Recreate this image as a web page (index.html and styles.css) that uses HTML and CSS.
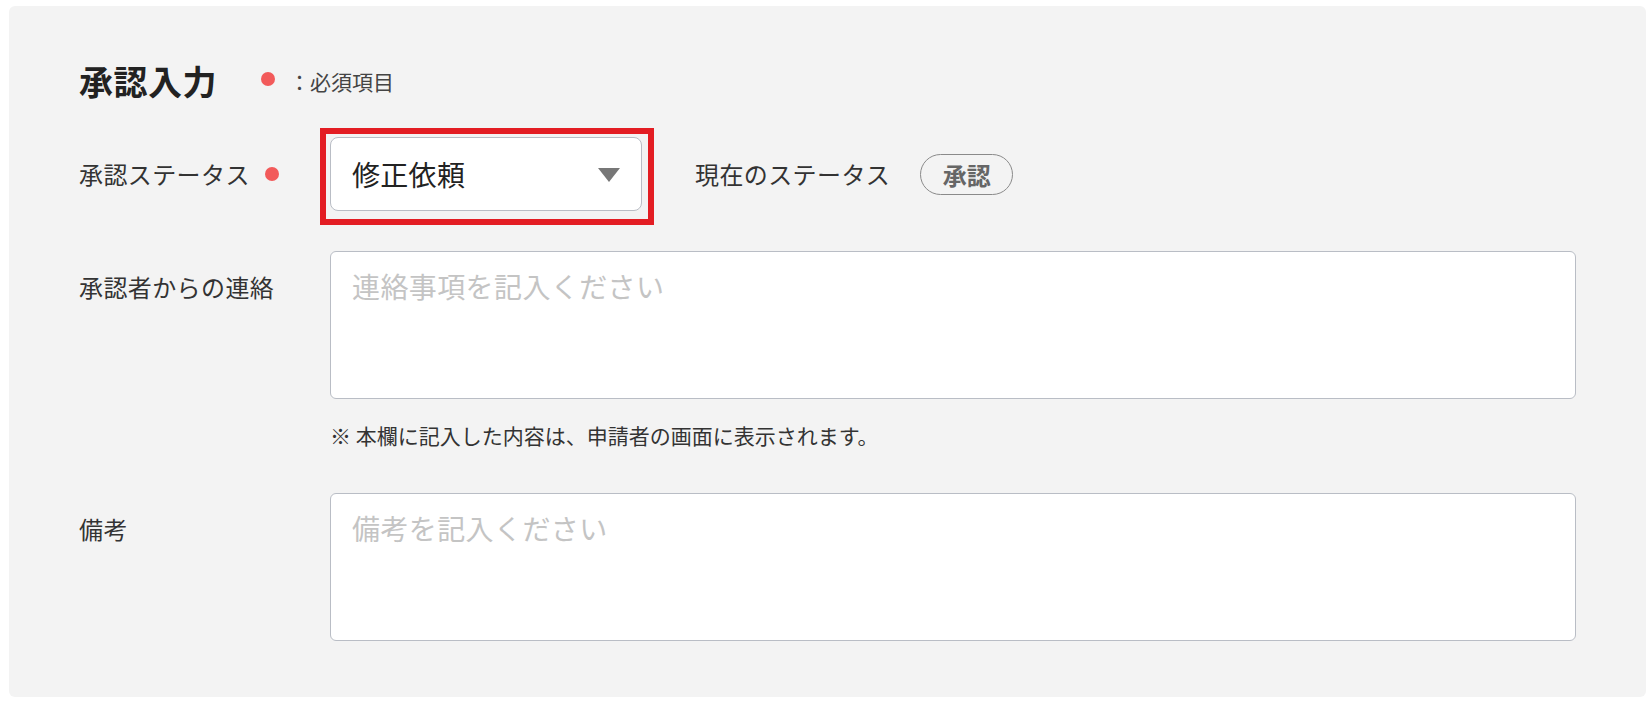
FILE: index.html
```html
<!DOCTYPE html>
<html lang="ja">
<head>
<meta charset="utf-8">
<title>承認入力</title>
<link rel="stylesheet" href="styles.css">
</head>
<body>
<div class="page">
  <section class="panel">
    <div class="title-row">
      <h1 class="title">承認入力</h1>
      <span class="req-dot title-dot"></span>
      <span class="req-note">：必須項目</span>
    </div>

    <div class="row row-status">
      <div class="label">承認ステータス<span class="req-dot label-dot"></span></div>
      <div class="select-wrap">
        <div class="select">
          <span class="select-value">修正依頼</span>
          <svg class="select-arrow" width="22" height="14" viewBox="0 0 22 14"><path d="M0 0 H22 L11 14 Z" fill="#777"/></svg>
        </div>
      </div>
      <span class="current-label">現在のステータス</span>
      <span class="badge">承認</span>
    </div>

    <div class="row row-text">
      <div class="label label-top">承認者からの連絡</div>
      <div class="field">
        <textarea class="textarea" placeholder="連絡事項を記入ください"></textarea>
        <p class="note">※ 本欄に記入した内容は、申請者の画面に表示されます。</p>
      </div>
    </div>

    <div class="row row-text row-remarks">
      <div class="label label-top">備考</div>
      <div class="field">
        <textarea class="textarea" placeholder="備考を記入ください"></textarea>
      </div>
    </div>
  </section>
</div>
</body>
</html>
```

FILE: styles.css
```css
html, body {
  margin: 0;
  padding: 0;
  background: #ffffff;
}

body {
  font-family: "Noto Sans CJK JP", "Noto Sans", sans-serif;
  color: #333333;
}

.page {
  padding: 6px 5px 9px 9px;
}

.panel {
  background: #f3f3f3;
  border-radius: 6px;
  padding: 50px 70px 56px 70px;
}

.title-row {
  display: flex;
  align-items: center;
  height: 50px;
}

.title {
  margin: 0;
  font-size: 34px;
  line-height: 50px;
  font-weight: 700;
  letter-spacing: 0.5px;
  color: #222222;
}

.req-dot {
  display: inline-block;
  width: 14px;
  height: 14px;
  border-radius: 50%;
  background: #f25a5a;
  flex: none;
}

.title-dot {
  margin-left: 44px;
  margin-top: -4px;
}

.req-note {
  margin-left: 14px;
  font-size: 21px;
  line-height: 30px;
  color: #444444;
}

.row {
  display: flex;
}

.row-status {
  margin-top: 31px;
  align-items: center;
}

.label {
  width: 251px;
  flex: none;
  font-size: 24px;
  line-height: 36px;
  letter-spacing: 0.4px;
  color: #333333;
  display: flex;
  align-items: center;
}

.label-dot {
  margin-left: 15px;
}

.select-wrap {
  position: relative;
  flex: none;
}

.select-wrap::after {
  content: "";
  position: absolute;
  left: -10px;
  top: -9px;
  right: -12px;
  bottom: -14px;
  border: 6px solid #e31d23;
  pointer-events: none;
}

.select {
  box-sizing: border-box;
  width: 312px;
  height: 74px;
  background: #ffffff;
  border: 1.5px solid #b9bdc5;
  border-radius: 8px;
  padding: 0 21px 0 21px;
  display: flex;
  align-items: center;
  justify-content: space-between;
}

.select-value {
  font-size: 28px;
  line-height: 40px;
  letter-spacing: 0.3px;
  color: #222222;
}

.select-arrow {
  display: block;
  margin-top: 2px;
}

.current-label {
  margin-left: 53px;
  font-size: 24px;
  line-height: 36px;
  letter-spacing: 0.4px;
  color: #333333;
}

.badge {
  margin-left: 30px;
  box-sizing: border-box;
  width: 93px;
  height: 41px;
  border: 1.5px solid #8a8a8a;
  border-radius: 21px;
  display: flex;
  align-items: center;
  justify-content: center;
  font-size: 24px;
  font-weight: 700;
  color: #666666;
}

.row-text {
  margin-top: 40px;
  align-items: flex-start;
}

.row-remarks {
  margin-top: 43px;
}

.label-top {
  padding-top: 18px;
}

.field {
  flex: 1;
  min-width: 0;
}

.textarea {
  display: block;
  box-sizing: border-box;
  width: 100%;
  height: 148px;
  margin: 0;
  padding: 14px 20px 14px 21px;
  background: #ffffff;
  border: 1px solid #b9bdc5;
  border-radius: 6px;
  font-family: "Noto Sans CJK JP", "Noto Sans", sans-serif;
  font-size: 28px;
  line-height: 40px;
  letter-spacing: 0.4px;
  color: #222222;
  resize: none;
  outline: none;
}

.textarea::placeholder {
  color: #c4c4c4;
  opacity: 1;
}

.note {
  margin: 21px 0 0 0;
  font-size: 21px;
  line-height: 30px;
  color: #333333;
}
```
